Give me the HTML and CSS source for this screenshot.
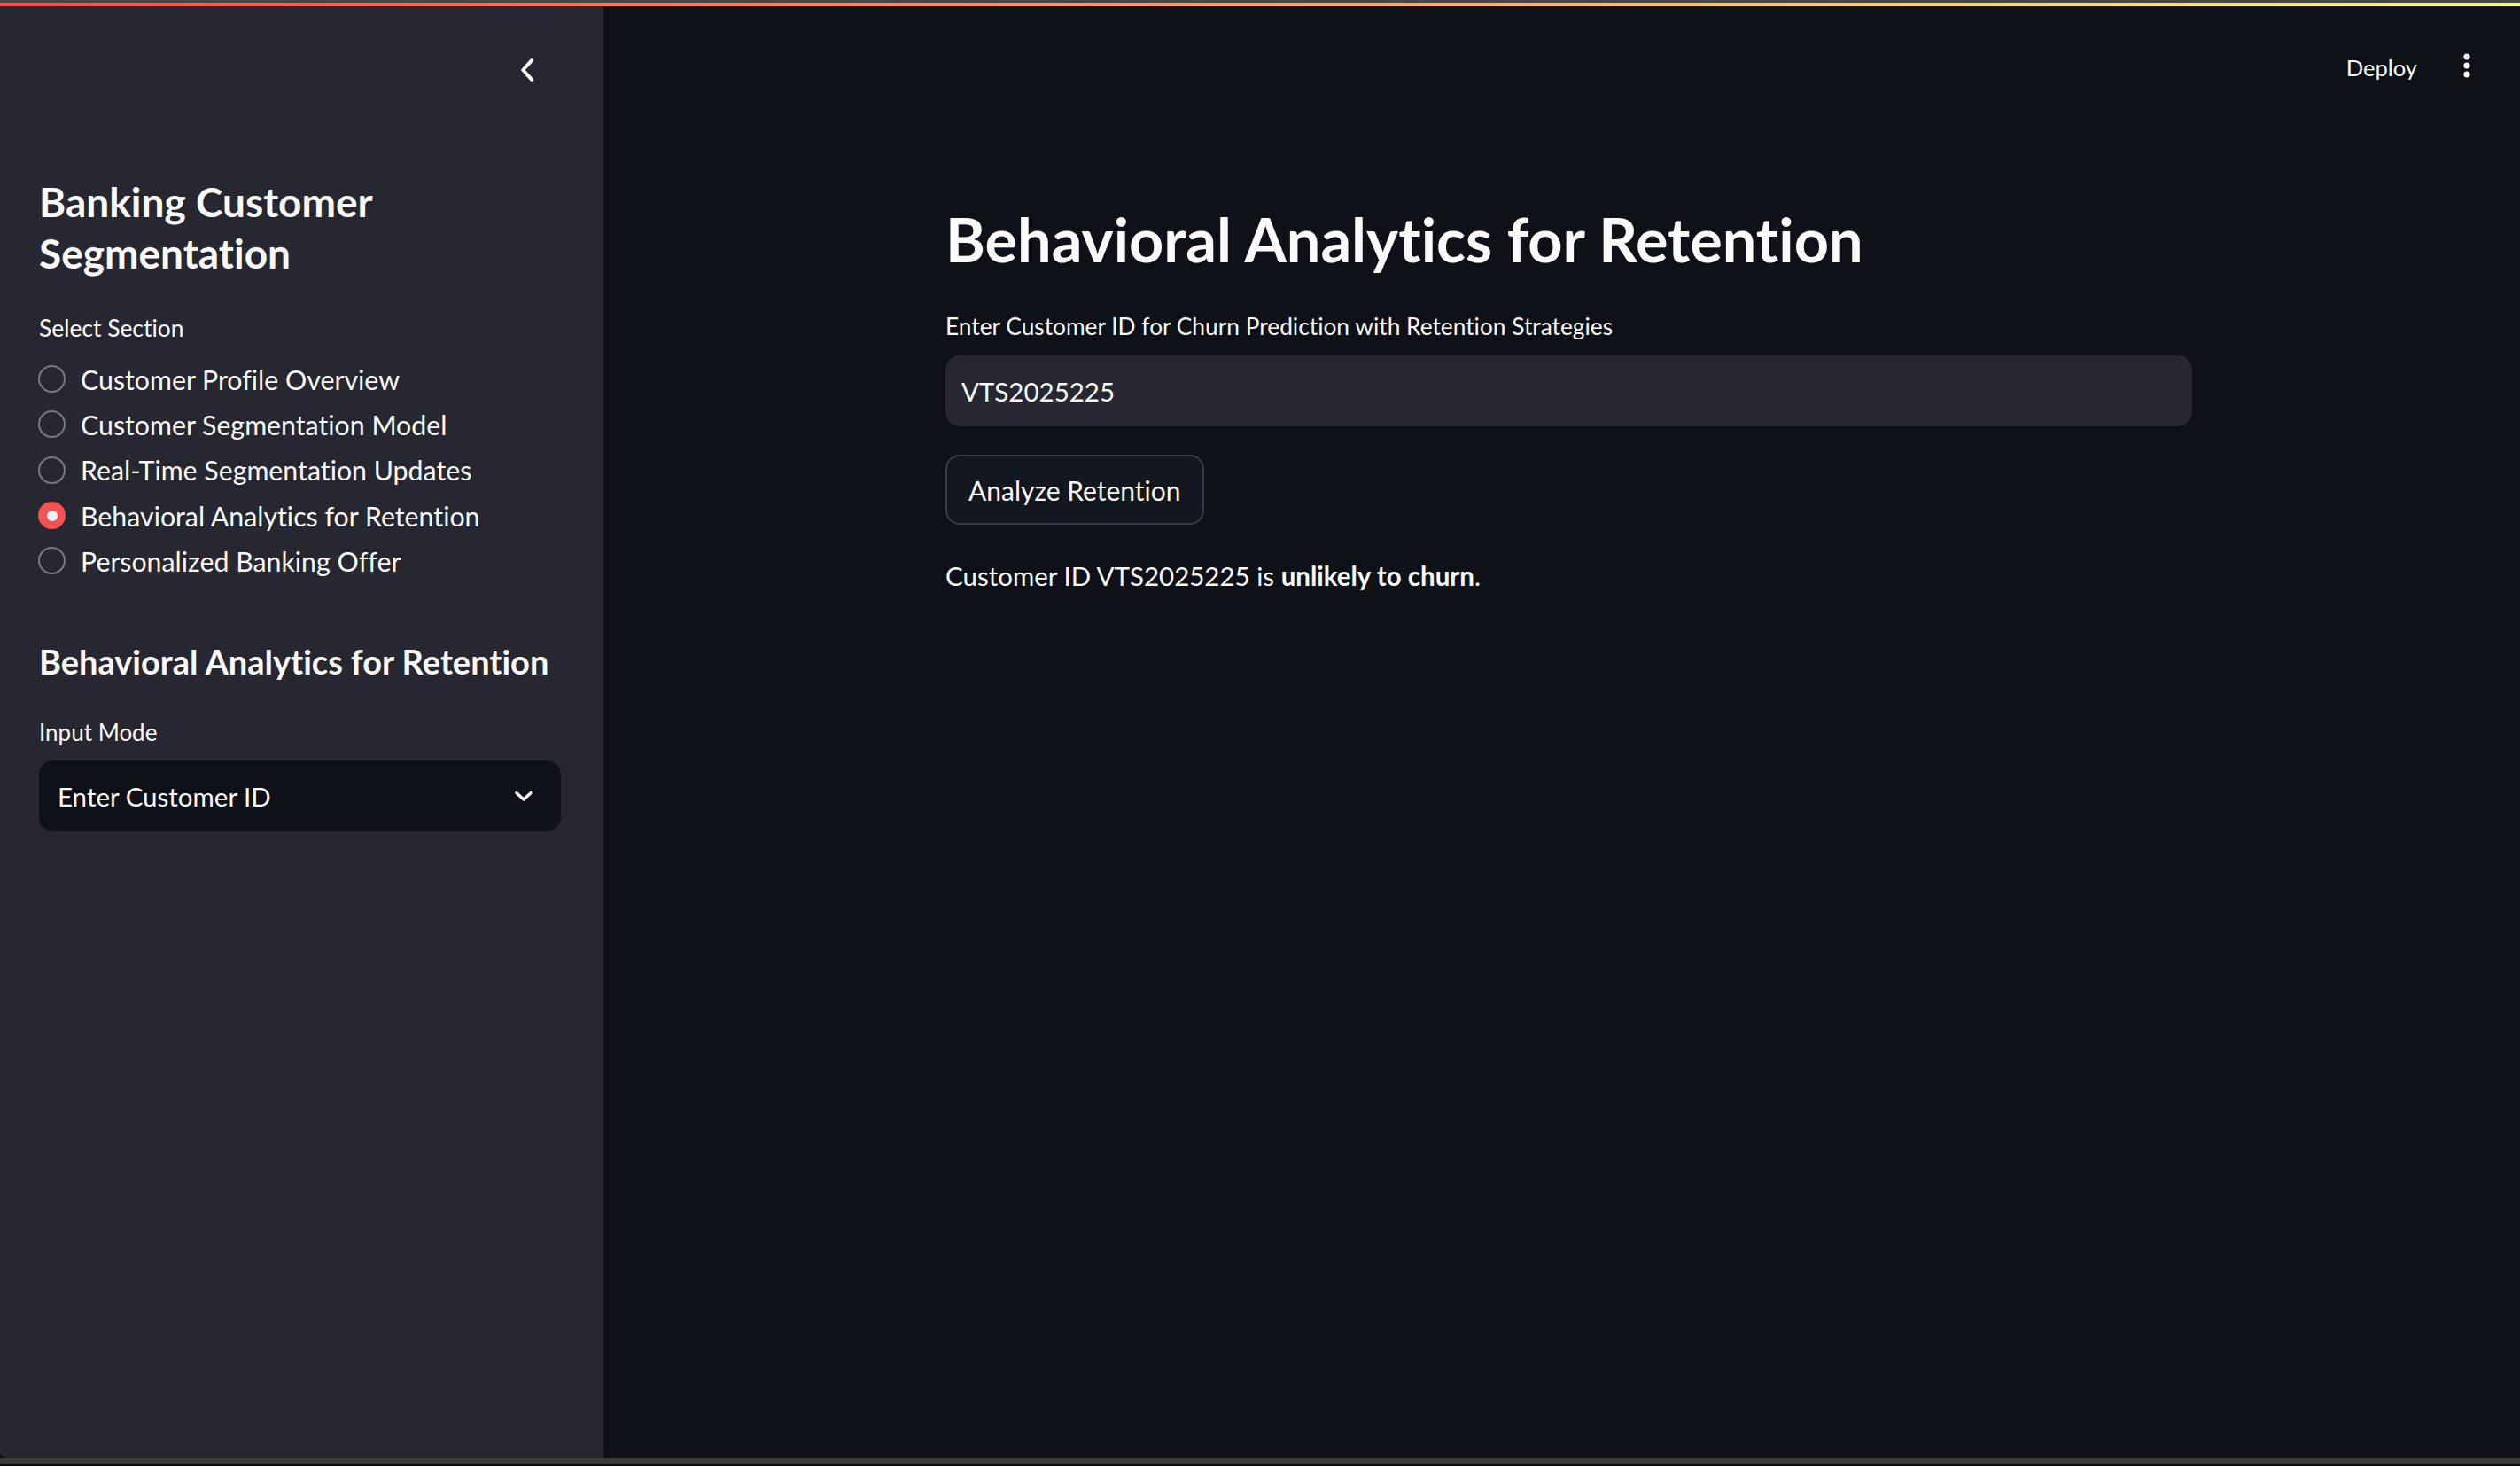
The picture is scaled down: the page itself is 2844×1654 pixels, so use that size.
FILE: index.html
```html
<!DOCTYPE html>
<html lang="en">
<head>
<meta charset="utf-8">
<title>Banking Customer Segmentation</title>
<link rel="stylesheet" href="styles.css">
</head>
<body>
<div class="frame-top"></div>
<div class="decoration"></div>
<div class="app">
  <aside class="sidebar">
    <div class="sb-top">
      <button class="collapse" aria-label="Collapse sidebar">
        <svg width="40" height="40" viewBox="0 0 24 24"><path d="M14.5 5.5 L8.5 12 L14.5 18.5" fill="none" stroke="#fafafa" stroke-width="2.4" stroke-linecap="round" stroke-linejoin="round"/></svg>
      </button>
    </div>
    <h1 class="sb-title">Banking Customer Segmentation</h1>
    <div class="sb-label">Select Section</div>
    <div class="radios">
      <div class="radio"><span class="dot"></span><span>Customer Profile Overview</span></div>
      <div class="radio"><span class="dot"></span><span>Customer Segmentation Model</span></div>
      <div class="radio"><span class="dot"></span><span>Real-Time Segmentation Updates</span></div>
      <div class="radio checked"><span class="dot"></span><span>Behavioral Analytics for Retention</span></div>
      <div class="radio"><span class="dot"></span><span>Personalized Banking Offer</span></div>
    </div>
    <h2 class="sb-header">Behavioral Analytics for Retention</h2>
    <div class="sb-label2">Input Mode</div>
    <div class="select">
      <span>Enter Customer ID</span>
      <svg width="32" height="32" viewBox="0 0 24 24"><path d="M6 9.5 L12 15 L18 9.5" fill="none" stroke="#fafafa" stroke-width="2.6" stroke-linecap="round" stroke-linejoin="round"/></svg>
    </div>
  </aside>
  <main class="main">
    <div class="topbar">
      <span class="deploy">Deploy</span>
      <svg class="kebab" width="8" height="30" viewBox="0 0 8 30"><circle cx="4" cy="5" r="3.6" fill="#fafafa"/><circle cx="4" cy="15" r="3.6" fill="#fafafa"/><circle cx="4" cy="25" r="3.6" fill="#fafafa"/></svg>
    </div>
    <div class="block">
      <h1 class="title">Behavioral Analytics for Retention</h1>
      <div class="label">Enter Customer ID for Churn Prediction with Retention Strategies</div>
      <div class="input">VTS2025225</div>
      <button class="btn">Analyze Retention</button>
      <p class="result">Customer ID VTS2025225 is <strong>unlikely to churn</strong>.</p>
    </div>
  </main>
</div>
<div class="frame-bottom"></div>
</body>
</html>
```
FILE: styles.css
```css
* { box-sizing: border-box; }
html, body {
  margin: 0;
  padding: 0;
  width: 2844px;
  height: 1654px;
  overflow: hidden;
  background: #0e1117;
  color: #fafafa;
  font-family: Lato, "Noto Sans", sans-serif;
  font-variant-ligatures: none;
}
.frame-top { height: 3px; background: #464646; }
.decoration { height: 4px; background: linear-gradient(90deg, #ff4b4b, #fffd80); }
.app { display: flex; height: 1638px; }
.frame-bottom { height: 9px; background: #3b3b3b; border-bottom: 2px solid #0a0a0a; }

.sidebar {
  width: 681px;
  flex: none;
  background: #262730;
  padding: 0 48px 0 44px;
  border-bottom-left-radius: 8px;
}
.sb-top {
  height: 144px;
  display: flex;
  align-items: center;
  justify-content: flex-end;
  padding-right: 17px;
}
.collapse {
  width: 40px; height: 40px; padding: 0; border: 0; background: transparent;
  display: flex; align-items: center; justify-content: center;
}
.sb-title {
  margin: 48px 0 0;
  font-size: 46px;
  line-height: 58px;
  font-weight: 700;
  width: 440px;
}
.sb-label {
  margin-top: 35px;
  font-size: 26.4px;
  line-height: 40px;
}
.radios { margin-top: 12px; }
.radio {
  height: 51.3px;
  display: flex;
  align-items: center;
  font-size: 30.3px;
}
.dot {
  width: 31px; height: 31px;
  border-radius: 50%;
  border: 2.5px solid #797a80;
  margin-left: -1px;
  margin-right: 17px;
  flex: none;
  display: flex; align-items: center; justify-content: center;
}
.radio.checked .dot {
  border-color: #f55353;
  background: #f55353;
}
.radio.checked .dot::after {
  content: "";
  width: 12px; height: 12px; border-radius: 50%;
  background: #f0f2f6;
}
.sb-header {
  margin: 62px 0 0;
  font-size: 38px;
  line-height: 52px;
  font-weight: 700;
  white-space: nowrap;
}
.sb-label2 {
  margin-top: 34px;
  font-size: 26px;
  line-height: 40px;
}
.select {
  margin-top: 12px;
  height: 80px;
  background: #0e1117;
  border-radius: 16px;
  display: flex;
  align-items: center;
  justify-content: space-between;
  padding: 0 26px 0 21px;
  font-size: 29.5px;
}

.main { flex: 1; display: flex; flex-direction: column; }
.topbar {
  height: 138px;
  display: flex;
  align-items: center;
  justify-content: flex-end;
  padding-right: 56px;
  gap: 52px;
}
.deploy { font-size: 25.5px; }
.kebab { margin-top: -4px; }
.block { width: 1407px; margin-left: 386px; }
.title {
  margin: 82px 0 0;
  font-size: 68.4px;
  line-height: 86px;
  font-weight: 700;
}
.label {
  margin-top: 35px;
  font-size: 26.3px;
  line-height: 40px;
}
.input {
  margin-top: 13px;
  height: 80px;
  background: #262730;
  border-radius: 16px;
  display: flex;
  align-items: center;
  padding-left: 18px;
  font-size: 29.5px;
}
.btn {
  display: flex;
  align-items: center;
  margin-top: 32px;
  height: 79px;
  padding: 0 24px;
  background: #131720;
  border: 2px solid #3a3c44;
  border-radius: 16px;
  color: #fafafa;
  font-family: inherit;
  font-variant-ligatures: none;
  font-size: 30px;
}
.result {
  margin: 34px 0 0;
  font-size: 29.5px;
  line-height: 48px;
}
.result strong { font-weight: 700; }
```
